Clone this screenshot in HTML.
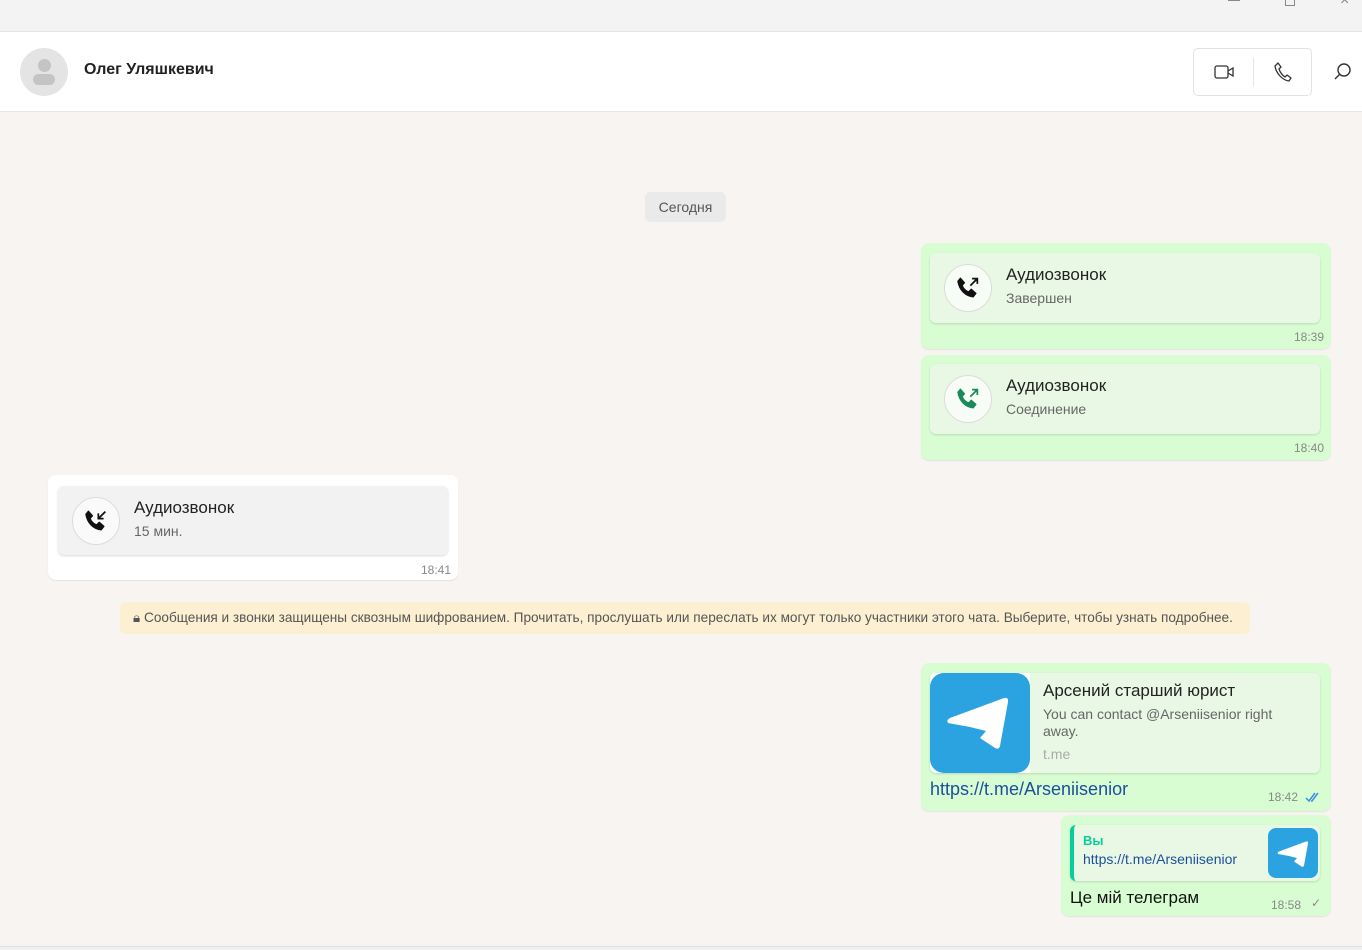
<!DOCTYPE html>
<html><head><meta charset="utf-8"><style>
*{box-sizing:border-box;margin:0;padding:0}
body{width:1362px;height:950px;overflow:hidden;background:#f7f4f1;font-family:"Segoe UI","Liberation Sans","DejaVu Sans",sans-serif;color:#111;position:relative}
.abs{position:absolute}
.top{left:0;top:0;width:1362px;height:32px;background:#f3f3f3;border-bottom:1px solid #e3e3e3}
.hdr{left:0;top:32px;width:1362px;height:80px;background:#fff;border-bottom:1px solid #e6e6e6}
.bub{position:absolute;border-radius:8px;box-shadow:0 1px 1px rgba(0,0,0,.08)}
.out{background:#d9fdd3}
.in{background:#fff}
.card{position:absolute;border-radius:6px;box-shadow:0 1px 2px rgba(0,0,0,.15)}
.out .card{background:#e9f8e5}
.in .card{background:#f2f2f2}
.ic{position:absolute;left:14px;top:11px;width:48px;height:48px;border-radius:50%;background:#f8fcf7;border:1px solid #dcdcdc;display:flex;align-items:center;justify-content:center}
.t1{position:absolute;left:76px;top:12px;font-size:17px;color:#222}
.t2{position:absolute;left:76px;top:37px;font-size:14px;color:#666}
.tm{position:absolute;font-size:12px;color:#888}
</style></head><body>
<div class="abs top">
<div class="abs" style="left:1228px;top:0;width:12px;height:1px;background:#888"></div>
<div class="abs" style="left:1285px;top:-4px;width:10px;height:10px;border:1px solid #888"></div>
<div class="abs" style="left:1340px;top:-8px;font-size:16px;color:#888">×</div>
</div>
<div class="abs hdr">
<div class="abs" style="left:20px;top:16px;width:48px;height:48px;border-radius:50%;background:#e4e4e4">
<div class="abs" style="left:18px;top:11px;width:13px;height:13px;border-radius:50%;background:#c4c4c4"></div>
<div class="abs" style="left:13px;top:26px;width:22px;height:11px;border-radius:6px;background:#c4c4c4"></div>
</div>
<div class="abs" style="left:84px;top:29px;font-size:16px;font-weight:bold;color:#222">Олег Уляшкевич</div>
<div class="abs" style="left:1193px;top:16px;width:119px;height:48px;border:1px solid #e2e2e2;border-radius:5px;background:#fff">
<div class="abs" style="left:59px;top:9px;width:1px;height:29px;background:#e6e6e6"></div>
<svg class="abs" style="left:20px;top:15px" width="22" height="16" viewBox="0 0 22 16"><rect x="1" y="2" width="13" height="12" rx="2" fill="none" stroke="#333" stroke-width="1.3"/><path d="M14 7l5-3v8l-5-3" fill="none" stroke="#333" stroke-width="1.3"/></svg>
<svg class="abs" style="left:79px;top:12px" width="20" height="22" viewBox="0 0 20 22"><path d="M5 2l3 4-2 2c1 3 3 6 6 8l2-2 4 3-2 3c-7-1-13-8-14-15z" fill="none" stroke="#333" stroke-width="1.3" stroke-linejoin="round"/></svg>
</div>
<svg class="abs" style="left:1333px;top:30px" width="20" height="20" viewBox="0 0 20 20"><circle cx="11" cy="8" r="6" fill="none" stroke="#333" stroke-width="1.4"/><path d="M7 12l-5 5" stroke="#333" stroke-width="1.4"/></svg>
</div>

<div class="abs" style="left:645px;top:192px;width:81px;height:30px;background:#eaeaea;border-radius:6px;font-size:14px;color:#555;text-align:center;line-height:30px">Сегодня</div>

<div class="bub out" style="left:921px;top:243px;width:410px;height:106px">
<div class="card" style="left:9px;top:10px;width:390px;height:70px">
<div class="ic"><svg width="28" height="28" viewBox="0 0 24 24"><path d="M5.5 3.5l3.5 4-2 2.3c1 2.5 3 4.5 5.5 5.5L14.8 13l4 3.6-2.3 3C9.5 19 4.5 13.5 3.3 6.2z" fill="#111" stroke="#111" stroke-width="1" stroke-linejoin="round"/><path d="M14 10l6-6M15.5 4H20v4.5" fill="none" stroke="#111" stroke-width="1.5"/></svg></div>
<div class="t1">Аудиозвонок</div><div class="t2">Завершен</div></div>
<div class="tm" style="right:7px;top:87px">18:39</div></div>

<div class="bub out" style="left:921px;top:355px;width:410px;height:105px">
<div class="card" style="left:9px;top:9px;width:390px;height:70px">
<div class="ic"><svg width="28" height="28" viewBox="0 0 24 24"><path d="M5.5 3.5l3.5 4-2 2.3c1 2.5 3 4.5 5.5 5.5L14.8 13l4 3.6-2.3 3C9.5 19 4.5 13.5 3.3 6.2z" fill="#1a8a5a" stroke="#1a8a5a" stroke-width="1" stroke-linejoin="round"/><path d="M14 10l6-6M15.5 4H20v4.5" fill="none" stroke="#1a8a5a" stroke-width="1.5"/></svg></div>
<div class="t1">Аудиозвонок</div><div class="t2">Соединение</div></div>
<div class="tm" style="right:7px;top:86px">18:40</div></div>

<div class="bub in" style="left:48px;top:475px;width:410px;height:105px">
<div class="card" style="left:10px;top:11px;width:390px;height:69px">
<div class="ic" style="background:#fafafa"><svg width="28" height="28" viewBox="0 0 24 24"><path d="M5.5 3.5l3.5 4-2 2.3c1 2.5 3 4.5 5.5 5.5L14.8 13l4 3.6-2.3 3C9.5 19 4.5 13.5 3.3 6.2z" fill="#111" stroke="#111" stroke-width="1" stroke-linejoin="round"/><path d="M20 4l-6 6M14 5.5V10h4.5" fill="none" stroke="#111" stroke-width="1.5"/></svg></div>
<div class="t1">Аудиозвонок</div><div class="t2">15 мин.</div></div>
<div class="tm" style="right:7px;top:88px">18:41</div></div>

<div class="abs" style="left:120px;top:602px;width:1130px;height:32px;background:#fdf0d2;border-radius:6px;font-size:13.6px;color:#555;line-height:32px;padding-left:13px;white-space:nowrap">🔒︎ Сообщения и звонки защищены сквозным шифрованием. Прочитать, прослушать или переслать их могут только участники этого чата. Выберите, чтобы узнать подробнее.</div>

<div class="bub out" style="left:921px;top:663px;width:410px;height:148px">
<div class="card" style="left:9px;top:10px;width:390px;height:100px;overflow:hidden">
<div class="abs" style="left:0;top:0;width:100px;height:100px;background:#fff"><div class="abs" style="left:0;top:0;width:100px;height:100px;background:#2aa3e0;border-radius:14px"><svg class="abs" style="left:12px;top:20px" width="72" height="60" viewBox="0 0 72 60"><path d="M6 30Q4 27 8 25L62 5Q67 4 66 9L58 53Q57 57 53 55L38 45 44 38 28 34z" fill="#fff"/></svg></div></div>
<div class="abs" style="left:113px;top:8px;font-size:17px;color:#222">Арсений старший юрист</div>
<div class="abs" style="left:113px;top:33px;width:260px;font-size:14px;color:#666;line-height:17px">You can contact @Arseniisenior right away.</div>
<div class="abs" style="left:113px;top:73px;font-size:14px;color:#aaa">t.me</div></div>
<div class="abs" style="left:9px;top:116px;font-size:18px;color:#1b4f9c">https://t.me/Arseniisenior</div>
<div class="tm" style="right:33px;top:127px">18:42</div>
<svg class="abs" style="right:10px;top:128px" width="16" height="12" viewBox="0 0 16 12"><path d="M1 7l3 3 6-8M6 10l1 0 6-8" fill="none" stroke="#3b8fe0" stroke-width="1.5"/></svg>
</div>

<div class="bub out" style="left:1061px;top:815px;width:270px;height:101px">
<div class="card" style="left:9px;top:10px;width:250px;height:56px;overflow:hidden;border-left:4px solid #06cf9c">
<div class="abs" style="left:9px;top:8px;font-size:13px;font-weight:bold;color:#06cf9c">Вы</div>
<div class="abs" style="left:9px;top:26px;font-size:14px;color:#1b4f9c">https://t.me/Arseniisenior</div>
<div class="abs" style="left:194px;top:3px;width:50px;height:50px;background:#2aa3e0;border-radius:8px"><svg class="abs" style="left:7px;top:11px" width="36" height="30" viewBox="0 0 72 60"><path d="M6 30Q4 27 8 25L62 5Q67 4 66 9L58 53Q57 57 53 55L38 45 44 38 28 34z" fill="#fff"/></svg></div></div>
<div class="abs" style="left:9px;top:73px;font-size:17px;color:#111">Це мій телеграм</div>
<div class="tm" style="right:30px;top:83px">18:58</div>
<div class="abs" style="right:10px;top:81px;font-size:12px;color:#888">✓</div>
</div>
<div class="abs" style="left:0;top:946px;width:1362px;height:4px;background:#f0f0f0;border-top:1px solid #e2e2e2"></div>
</body></html>
